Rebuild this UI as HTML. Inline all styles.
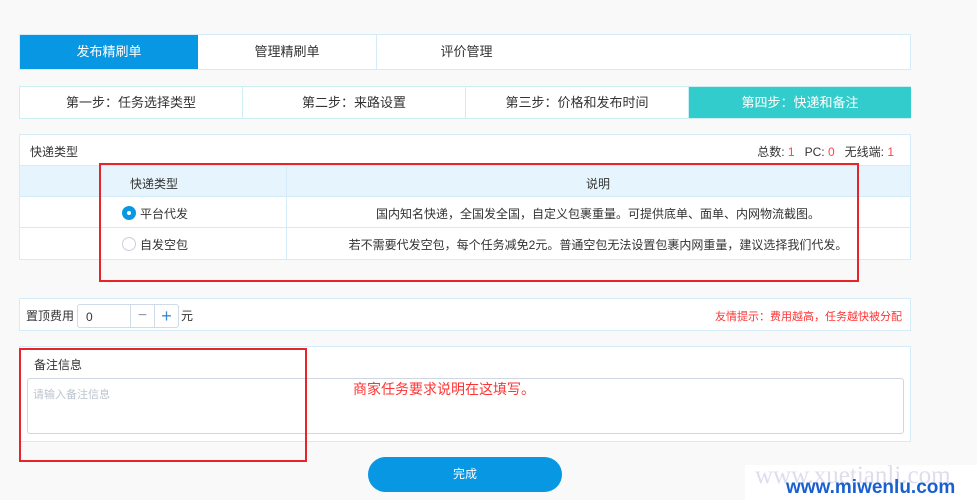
<!DOCTYPE html>
<html><head><meta charset="utf-8"><style>
body{margin:0;width:977px;height:500px;background:#f9f9f9;font-family:"Liberation Sans","Noto Sans CJK SC",sans-serif;font-size:12px;color:#333;position:relative;overflow:hidden}
.a{position:absolute;box-sizing:border-box}
.tabs{left:19px;top:34px;width:892px;height:36px;background:#fff;border:1px solid #d5ebf7}
.tab{top:0;height:34px;line-height:34px;text-align:center;font-size:13px}
.steps{left:19px;top:86px;width:892px;height:33px;background:#fff;border:1px solid #cdeef3}
.step{top:0;height:31px;line-height:31px;text-align:center;font-size:13px;border-right:1px solid #cdeef3}
.panel{background:#fff;border:1px solid #d5ebf7}
.red{border:2px solid #e8242b}
.row{left:0;width:890px;border-bottom:1px solid #d5ebf7}
</style></head><body>
<div class="a tabs">
<div class="a tab" style="left:0;width:178px;background:#0797e3;color:#fff">发布精刷单</div>
<div class="a tab" style="left:178px;width:179px;border-right:1px solid #d5ebf7">管理精刷单</div>
<div class="a tab" style="left:357px;width:179px">评价管理</div>
</div>
<div class="a steps">
<div class="a step" style="left:0;width:223px">第一步：任务选择类型</div>
<div class="a step" style="left:223px;width:223px">第二步：来路设置</div>
<div class="a step" style="left:446px;width:223px">第三步：价格和发布时间</div>
<div class="a step" style="left:669px;width:222px;background:#33cccc;color:#fff;border:none">第四步：快递和备注</div>
</div>
<div class="a panel" style="left:19px;top:134px;width:892px;height:126px">
<div class="a" style="left:10px;top:8px">快递类型</div>
<div class="a" style="right:16px;top:8px">总数: <span style="color:#f44">1</span>&nbsp;&nbsp;&nbsp;PC: <span style="color:#f44">0</span>&nbsp;&nbsp;&nbsp;无线端: <span style="color:#f44">1</span></div>
<div class="a row" style="top:30px;height:32px;background:#e6f5fd;border-top:1px solid #d5ebf7"></div>
<div class="a row" style="top:62px;height:31px"></div>
<div class="a row" style="top:93px;height:31px;border:none"></div>
<div class="a" style="left:266px;top:30px;width:1px;height:94px;background:#d5ebf7"></div>
<div class="a" style="left:110px;top:40px">快递类型</div>
<div class="a" style="left:266px;width:624px;top:40px;text-align:center">说明</div>
<div class="a" style="left:102px;top:71px;width:14px;height:14px;border-radius:50%;background:#0797e3"><div class="a" style="left:5px;top:5px;width:4px;height:4px;border-radius:50%;background:#fff"></div></div>
<div class="a" style="left:120px;top:70px">平台代发</div>
<div class="a" style="left:102px;top:102px;width:14px;height:14px;border-radius:50%;border:1px solid #ccd"></div>
<div class="a" style="left:120px;top:101px">自发空包</div>
<div class="a" style="left:266px;width:624px;top:70px;text-align:center">国内知名快递，全国发全国，自定义包裹重量。可提供底单、面单、内网物流截图。</div>
<div class="a" style="left:266px;width:624px;top:101px;text-align:center">若不需要代发空包，每个任务减免2元。普通空包无法设置包裹内网重量，建议选择我们代发。</div>
</div>
<div class="a red" style="left:99px;top:163px;width:760px;height:119px"></div>
<div class="a panel" style="left:19px;top:298px;width:892px;height:33px">
<div class="a" style="left:6px;top:8px">置顶费用</div>
<div class="a" style="left:57px;top:5px;width:102px;height:24px;border:1px solid #cfdbe6;border-radius:3px;background:#fff">
<div class="a" style="left:8px;top:5px">0</div>
<div class="a" style="left:52px;top:0;width:24px;height:22px;border-left:1px solid #cfdbe6;text-align:center;line-height:22px;color:#999;font-size:16px">−</div>
<div class="a" style="left:76px;top:0;width:24px;height:22px;border-left:1px solid #cfdbe6;text-align:center;line-height:22px;color:#3a8ad0;font-size:18px">+</div>
</div>
<div class="a" style="left:161px;top:8px">元</div>
<div class="a" style="right:8px;top:9px;color:#f33;font-size:11px">友情提示：费用越高，任务越快被分配</div>
</div>
<div class="a panel" style="left:19px;top:346px;width:892px;height:96px">
<div class="a" style="left:14px;top:9px">备注信息</div>
<div class="a" style="left:7px;top:31px;width:877px;height:56px;border:1px solid #cfd6e0;border-radius:3px;background:#fff">
<div class="a" style="left:5px;top:7px;color:#bcc4cf;font-size:11px">请输入备注信息</div>
</div>
</div>
<div class="a" style="left:353px;top:379px;color:#f33;font-size:14px">商家任务要求说明在这填写。</div>
<div class="a red" style="left:19px;top:348px;width:288px;height:114px"></div>
<div class="a" style="left:368px;top:457px;width:194px;height:35px;border-radius:18px;background:#0797e3;color:#fff;text-align:center;line-height:35px">完成</div>
<div class="a" style="left:745px;top:465px;width:232px;height:35px;background:#fff"></div>
<div class="a" style="left:755px;top:462px;font-size:25px;color:#dde;font-family:'Liberation Serif',serif;letter-spacing:0px">www.xuetianli.com</div>
<div class="a" style="left:786px;top:477px;font-size:19px;color:#1a5fd0;font-weight:bold">www.miwenlu.com</div>
</body></html>
